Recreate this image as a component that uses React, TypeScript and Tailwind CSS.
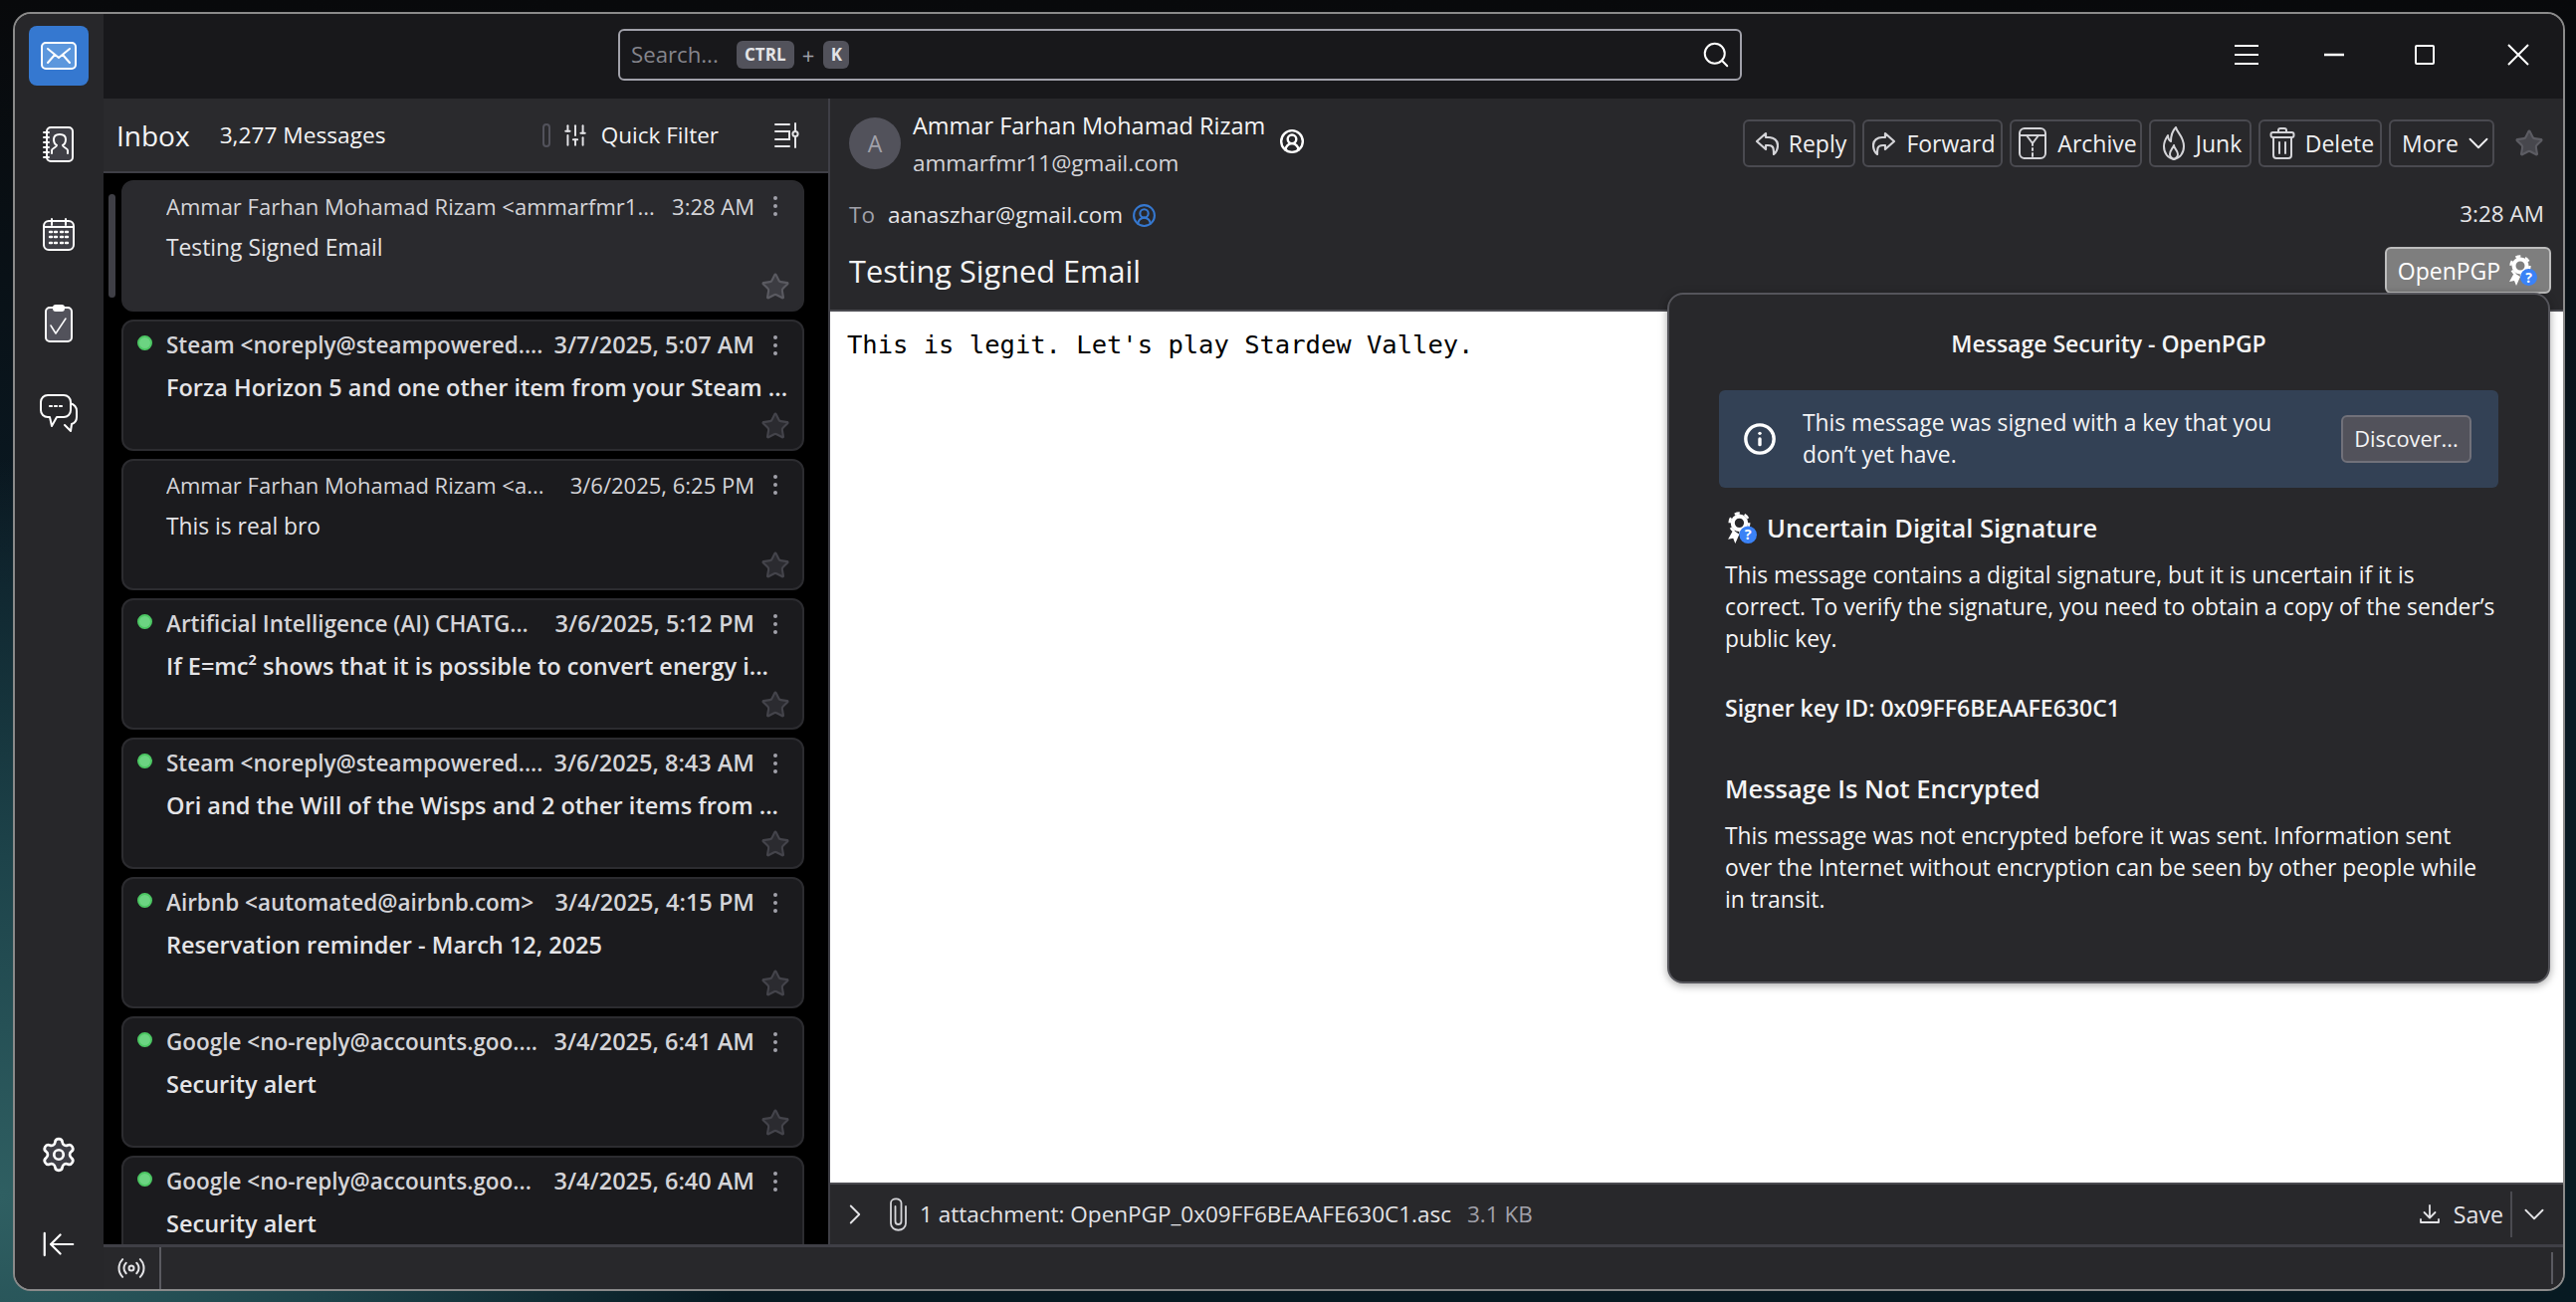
import React from "react";
import { Search, SlidersVertical, Star, Settings, ArrowLeftToLine, Radio, ChevronDown, ChevronRight, Info, CircleUserRound } from "lucide-react";

type Mail = { from: string; date: string; subject: string; unread?: boolean; selected?: boolean };
const mails: Mail[] = [
  { from: "Ammar Farhan Mohamad Rizam <ammarfmr1...", date: "3:28 AM", subject: "Testing Signed Email", selected: true },
  { from: "Steam <noreply@steampowered....", date: "3/7/2025, 5:07 AM", subject: "Forza Horizon 5 and one other item from your Steam ...", unread: true },
  { from: "Ammar Farhan Mohamad Rizam <a...", date: "3/6/2025, 6:25 PM", subject: "This is real bro" },
  { from: "Artificial Intelligence (AI) CHATG...", date: "3/6/2025, 5:12 PM", subject: "If E=mc² shows that it is possible to convert energy i...", unread: true },
  { from: "Steam <noreply@steampowered....", date: "3/6/2025, 8:43 AM", subject: "Ori and the Will of the Wisps and 2 other items from ...", unread: true },
  { from: "Airbnb <automated@airbnb.com>", date: "3/4/2025, 4:15 PM", subject: "Reservation reminder - March 12, 2025", unread: true },
  { from: "Google <no-reply@accounts.goo....", date: "3/4/2025, 6:41 AM", subject: "Security alert", unread: true },
  { from: "Google <no-reply@accounts.goo...", date: "3/4/2025, 6:40 AM", subject: "Security alert", unread: true },
];

function MailGlyph() {
  return (
    <svg width="36" height="28" viewBox="0 0 36 28" fill="none" stroke="#fff" strokeWidth="2" strokeLinecap="round">
      <rect x="1" y="1" width="34" height="26" rx="4" fill="#5c97dd" />
      <path d="M7 7l11 9 11-9M7 21l7-8M29 21l-7-8" />
    </svg>
  );
}
function ContactsGlyph() {
  return (
    <svg width="32" height="36" viewBox="0 0 32 36" fill="none" stroke="#fff" strokeWidth="2" strokeLinecap="round" strokeLinejoin="round">
      <rect x="4" y="1" width="26" height="34" rx="4" fill="#3f3f46" />
      <path d="M1 6h5M1 11h5M1 16h5M1 21h5M1 26h5M1 31h5" />
      <path d="M9 27v-3c0-2 5-3 5-5-2-1-3-3-3-6 0-3 2-5 6-5s6 2 6 5c0 3-1 5-3 6 0 2 5 3 5 5v3" />
    </svg>
  );
}
function CalendarGlyph() {
  return (
    <svg width="32" height="33" viewBox="0 0 32 33" fill="none" stroke="#fff" strokeWidth="2" strokeLinecap="round">
      <rect x="1" y="3" width="30" height="29" rx="5" fill="#3f3f46" />
      <path d="M1 9h30M9 1v6M23 1v6" />
      <path d="M7 14h2M12 14h2M18 14h2M23 14h2M7 19h2M12 19h2M18 19h2M23 19h2M7 25h2M12 25h2M18 25h2M23 25h2" strokeWidth="2.4" />
    </svg>
  );
}
function TasksGlyph() {
  return (
    <svg width="28" height="38" viewBox="0 0 28 38" fill="none" stroke="#fff" strokeWidth="2" strokeLinecap="round" strokeLinejoin="round">
      <rect x="1" y="3" width="26" height="34" rx="4" fill="#52525b" />
      <rect x="9" y="1" width="10" height="5" rx="2" fill="#fff" />
      <path d="M6 21l5 8 10-15" strokeWidth="1.5" />
    </svg>
  );
}
function ChatGlyph() {
  return (
    <svg width="38" height="38" viewBox="0 0 38 38" fill="none" stroke="#fff" strokeWidth="2" strokeLinecap="round" strokeLinejoin="round">
      <path d="M30 9c4 1 7 4 7 8v6c0 4-2 6-5 7l-1 7-6-6" />
      <path d="M8 1h16c4 0 7 3 7 7v8c0 4-3 7-7 7H17l-5 9-2-9H8c-4 0-7-3-7-7V8c0-4 3-7 7-7z" fill="#27272a" />
      <path d="M10 12h2M15 12h2M20 12h2" strokeWidth="2.2" />
    </svg>
  );
}
function MenuGlyph() {
  return (
    <svg width="24" height="20" viewBox="0 0 24 20" stroke="#fff" strokeWidth="2"><path d="M0 1h24M0 10h24M0 19h24" /></svg>
  );
}
function MinimizeGlyph() {
  return <svg width="20" height="4" viewBox="0 0 20 4" stroke="#fff" strokeWidth="2.4"><path d="M0 2h20" /></svg>;
}
function MaximizeGlyph() {
  return <svg width="20" height="20" viewBox="0 0 20 20" fill="none" stroke="#fff" strokeWidth="2"><rect x="1" y="1" width="18" height="18" rx="1" /></svg>;
}
function CloseGlyph() {
  return <svg width="22" height="22" viewBox="0 0 22 22" stroke="#fff" strokeWidth="2"><path d="M1 1l20 20M21 1L1 21" /></svg>;
}
function LayoutGlyph() {
  return (
    <svg width="26" height="26" viewBox="0 0 26 26" fill="none" stroke="#e4e4e7" strokeWidth="2" strokeLinecap="round">
      <path d="M2 2h14M2 24h14M2 9h14v8H2M22 1v7M22 15v10" />
      <circle cx="22" cy="11.5" r="2.6" />
    </svg>
  );
}
function ReplyGlyph({ flip }: { flip?: boolean }) {
  return (
    <svg width="24" height="24" viewBox="0 0 24 24" fill="none" stroke="#d4d4d8" strokeWidth="2.2" strokeLinejoin="round" className={flip ? "-scale-x-100" : ""}>
      <path d="M11 2L2 10l9 8v-4h2c3 0 5 1 5.500 3 .5 2 .5 4 .5 6 2.500-2 4-5 4-9 0-5-4-8-9-8h-3V2z" />
    </svg>
  );
}
function ArchiveGlyph() {
  return (
    <svg width="30" height="34" viewBox="0 0 30 34" fill="none" stroke="#d4d4d8" strokeWidth="2" strokeLinecap="round" strokeLinejoin="round">
      <rect x="2" y="2" width="26" height="30" rx="5" />
      <path d="M2 9h26M9 9l6 8 6-8M15 17v2M15 22v2M15 27v3" />
    </svg>
  );
}
function FlameGlyph() {
  return (
    <svg width="24" height="34" viewBox="0 0 24 34" fill="none" stroke="#d4d4d8" strokeWidth="2" strokeLinecap="round" strokeLinejoin="round">
      <path d="M14 1c1 5 8 9 8 19 0 7-4 12-10 13C6 32 2 27 2 20c0-5 2-8 4-11 0 3 1 5 3 6 0-5 1-10 5-14z" />
      <path d="M12 19c0 3 4 5 4 9 0 2-2 4-4 5-2-1-4-3-4-5 0-4 3-6 4-9z" />
    </svg>
  );
}
function TrashGlyph() {
  return (
    <svg width="26" height="32" viewBox="0 0 26 32" fill="none" stroke="#d4d4d8" strokeWidth="2" strokeLinecap="round" strokeLinejoin="round">
      <rect x="1.5" y="5" width="23" height="5" rx="2" />
      <path d="M9 5V3c0-1 1-2 2-2h4c1 0 2 1 2 2v2M4 10v18c0 2 1 3 3 3h12c2 0 3-1 3-3V10M10 15v11M16 15v11" />
    </svg>
  );
}
function ClipGlyph() {
  return (
    <svg width="17" height="34" viewBox="0 0 17 34" fill="none" stroke="#d4d4d8" strokeWidth="1.8" strokeLinecap="round">
      <path d="M5.500 9v15c0 4 6 4 6 0V5.500c0-5.500-10.500-5.500-10.500 0V26c0 9 15 9 15 0V9" />
    </svg>
  );
}
function SaveGlyph() {
  return (
    <svg width="20" height="20" viewBox="0 0 20 20" fill="none" stroke="#e4e4e7" strokeWidth="1.8" strokeLinecap="round" strokeLinejoin="round">
      <path d="M10 1v12M4.500 8l5.500 5.500L15.500 8M1 15v3h18v-3" />
    </svg>
  );
}
function SignatureGlyph({ size }: { size: number }) {
  return (
    <svg width={size} height={size} viewBox="0 0 32 32" fill="none">
      <circle cx="14" cy="11" r="6.500" stroke="#fff" strokeWidth="4" />
      <circle cx="14" cy="11" r="9.500" stroke="#fff" strokeWidth="2.400" strokeDasharray="5 4.950" />
      <path d="M8 18l-5 9 5-1 2 5 4-9z" fill="#fff" />
      <circle cx="22.500" cy="22.500" r="8.500" fill="#3b82f6" />
      <text x="22.500" y="27.500" textAnchor="middle" fontSize="14" fontWeight="700" fill="#fff" fontFamily="Open Sans">?</text>
    </svg>
  );
}

function MailCard({ m }: { m: Mail }) {
  const sender = m.unread ? "text-[22.500px] font-semibold" : "text-[22px] font-normal";
  const date = m.unread ? "text-[23.500px] font-semibold" : "text-[22px] font-normal";
  const subject = m.unread ? "text-[23.500px] font-semibold" : "text-[22.800px] font-normal";
  return (
    <div className={`relative mb-2 flex h-[132px] shrink-0 flex-col rounded-xl border-2 pl-[14px] pr-[14px] pt-[6px] ${m.selected ? "border-[#2a2a2e] bg-[#2a2a2e]" : "border-[#2c2c30] bg-[#1b1b1e]"}`}>
      <div className="flex h-[36px] items-center">
        <div className="flex w-[29px] shrink-0 self-start pt-[8px]">
          {m.unread && <div className="h-[15px] w-[15px] rounded-full border-2 border-[#4cc763] bg-[#6cd482]" />}
        </div>
        <div className={`min-w-0 flex-1 truncate text-[#d4d4d8] ${sender}`}>{m.from}</div>
        <div className={`shrink-0 text-[#d4d4d8] ${date}`}>{m.date}</div>
        <div className="ml-[18px] mr-[10px] flex w-[6px] shrink-0 flex-col items-center gap-[4px] self-start pt-[8px]">
          <div className="h-[4px] w-[4px] rounded-full bg-[#a1a1aa]" />
          <div className="h-[4px] w-[4px] rounded-full bg-[#a1a1aa]" />
          <div className="h-[4px] w-[4px] rounded-full bg-[#a1a1aa]" />
        </div>
      </div>
      <div className={`ml-[29px] mt-[6px] h-[36px] whitespace-nowrap leading-[36px] text-[#e4e4e7] ${subject}`}>{m.subject}</div>
      <div className="-mr-[2px] mt-auto flex justify-end pb-[8px]">
        <Star size={30} strokeWidth={1.7} className={m.selected ? "text-[#5a5a61]" : "text-[#44444b]"} fill={m.selected ? "#3c3c42" : "#2b2b30"} />
      </div>
    </div>
  );
}

function ToolButton({ w, icon, label }: { w: string; icon: React.ReactNode; label: string }) {
  return (
    <button className={`flex h-[48px] items-center justify-center gap-[10px] rounded-md border-2 border-[#4a4a50] pl-[3px] text-[23px] text-[#f0f0f2] ${w}`}>
      {icon}
      <span>{label}</span>
    </button>
  );
}

export default function App() {
  return (
    <div className="h-[1308px] w-[2588px] overflow-hidden bg-[radial-gradient(circle_at_0%_92%,#2f5f62_0%,#1d434a_12%,transparent_26%),linear-gradient(180deg,#08090b_0%,#0a1a24_45%,#071a22_100%)] pl-[13px] pt-[12px] font-['Open_Sans',sans-serif]">
      <div className="flex h-[1285px] w-[2564px] overflow-hidden rounded-[18px] border-2 border-[#8a8a8a] bg-[#27272a]">
        <aside className="flex w-[89px] shrink-0 flex-col items-center bg-[#27272a] pr-[1px] pt-[12px]">
          <div className="mb-[14px] flex h-[60px] w-[60px] items-center justify-center rounded-lg bg-[#3578d0]"><MailGlyph /></div>
          <div className="flex h-[90px] items-center"><ContactsGlyph /></div>
          <div className="flex h-[90px] items-center"><CalendarGlyph /></div>
          <div className="flex h-[90px] items-center"><TasksGlyph /></div>
          <div className="flex h-[90px] items-center"><ChatGlyph /></div>
          <div className="mt-auto flex h-[90px] items-center"><Settings size={38} strokeWidth={1.7} className="text-white" fill="#3f3f46" /></div>
          <div className="flex h-[90px] items-center"><ArrowLeftToLine size={38} strokeWidth={1.4} className="text-white" /></div>
        </aside>
        <div className="flex min-w-0 flex-1 flex-col">
          <header className="flex h-[85px] shrink-0 items-center bg-[#18181b] pb-[3px] pl-[517px]">
            <div className="flex h-[52px] w-[1129px] items-center rounded-md border-2 border-[#a1a1aa] pl-[11px] pr-[9px]">
              <span className="text-[22.200px] text-[#85858c]">Search...</span>
              <span className="ml-[18px] flex h-[28px] w-[58px] items-center justify-center rounded-md bg-[#52525b] text-[17px] font-bold text-[#e4e4e7]">CTRL</span>
              <span className="ml-[8px] mr-[9px] text-[22px] text-[#a1a1aa]">+</span>
              <span className="flex h-[28px] w-[26px] items-center justify-center rounded-md bg-[#52525b] text-[17px] font-bold text-[#e4e4e7]">K</span>
              <Search size={30} strokeWidth={1.6} className="ml-auto text-white" />
            </div>
            <div className="ml-auto flex">
              <div className="flex h-[40px] w-[91px] items-center justify-center"><MenuGlyph /></div>
              <div className="flex h-[40px] w-[86px] items-center justify-center"><MinimizeGlyph /></div>
              <div className="flex h-[40px] w-[96px] items-center justify-center"><MaximizeGlyph /></div>
              <div className="flex h-[40px] w-[91px] items-center justify-center"><CloseGlyph /></div>
            </div>
          </header>
          <div className="flex min-h-0 flex-1">
            <section className="flex w-[728px] shrink-0 flex-col bg-black">
              <div className="flex h-[75px] shrink-0 items-center border-b-2 border-[#3f3f46] bg-[#2a2a2d] pl-[13px] pr-[29px] pt-[1px] text-[#f4f4f5]">
                <span className="text-[28px] font-medium">Inbox</span>
                <span className="ml-[30px] text-[22.700px]">3,277 Messages</span>
                <div className="ml-auto h-[24px] w-[8px] rounded-full border-2 border-[#52525b]" />
                <SlidersVertical size={26} strokeWidth={1.8} className="ml-[12px] rotate-180 text-[#e4e4e7]" />
                <span className="ml-[13px] text-[22.500px]">Quick Filter</span>
                <div className="ml-[55px]"><LayoutGlyph /></div>
              </div>
              <div className="relative min-h-0 flex-1 overflow-hidden pl-[18px] pr-[24px] pt-[7px]">
                <div className="absolute left-[5px] top-[21px] h-[104px] w-[7px] rounded-full bg-[#3f3f46]" />
                {mails.map((m, i) => (
                  <MailCard key={i} m={m} />
                ))}
              </div>
            </section>
            <section className="relative flex min-w-0 flex-1 flex-col border-l-2 border-[#3f3f46]">
              <div className="h-[214px] shrink-0 border-b-2 border-[#4a4a50] bg-[#28282b] pl-[19px] pr-[19px]">
                <div className="flex h-[97px] items-start">
                  <div className="mt-[19px] flex h-[52px] w-[52px] shrink-0 items-center justify-center rounded-full bg-[#52525b] text-[23px] text-[#a1a1aa]">A</div>
                  <div className="ml-[12px] pt-[9px]">
                    <span className="text-[23.500px] leading-[37px] text-[#f4f4f5]">Ammar Farhan Mohamad Rizam</span>
                    <div className="text-[22.500px] leading-[37px] text-[#d4d4d8]">ammarfmr11@gmail.com</div>
                  </div>
                  <CircleUserRound size={26} strokeWidth={2.2} className="ml-[14px] mt-[30px] text-white" />
                  <div className="ml-auto mt-[21px] flex items-center gap-[7px]">
                    <ToolButton w="w-[113px]" icon={<ReplyGlyph />} label="Reply" />
                    <ToolButton w="w-[141px]" icon={<ReplyGlyph flip />} label="Forward" />
                    <ToolButton w="w-[133px]" icon={<ArchiveGlyph />} label="Archive" />
                    <ToolButton w="w-[103px]" icon={<FlameGlyph />} label="Junk" />
                    <ToolButton w="w-[124px]" icon={<TrashGlyph />} label="Delete" />
                    <button className="flex h-[48px] w-[106px] items-center gap-[3px] rounded-md border-2 border-[#4a4a50] pl-[11px] text-[23px] text-[#f0f0f2]">
                      More <ChevronDown size={34} strokeWidth={1.3} className="shrink-0" />
                    </button>
                    <Star size={30} strokeWidth={1.7} className="ml-[13px] text-[#5c5c63]" fill="#47474d" />
                  </div>
                </div>
                <div className="flex h-[40px] items-center text-[22.500px]">
                  <span className="text-[#a1a1aa]">To</span>
                  <span className="ml-[13px] text-[#e4e4e7]">aanaszhar@gmail.com</span>
                  <CircleUserRound size={25} strokeWidth={2} className="ml-[9px] text-[#3578d0]" />
                  <span className="ml-auto -translate-y-px text-[22.500px] text-[#e4e4e7]">3:28 AM</span>
                </div>
                <div className="mt-[12px] flex h-[47px] items-center">
                  <span className="translate-y-px text-[30.700px] text-[#f4f4f5]">Testing Signed Email</span>
                  <button className="-mr-[7px] ml-auto flex h-[47px] w-[167px] items-center justify-center gap-[6px] rounded-md border-2 border-[#bdbdbd] bg-[#7e7e7e] text-[23px] text-white">
                    <span className="translate-y-px">OpenPGP</span> <SignatureGlyph size={32} />
                  </button>
                </div>
              </div>
              <div className="min-h-0 flex-1 bg-white pl-[17px] pt-[19px] font-['DejaVu_Sans_Mono',monospace] text-[25.500px] leading-[28px] text-black">
                This is legit. Let's play Stardew Valley.
              </div>
              <div className="flex h-[62px] shrink-0 items-center border-t-2 border-[#4a4a50] bg-[#28282b] pl-[8px] pr-[12px] text-[#e4e4e7]">
                <ChevronRight size={34} strokeWidth={1.3} />
                <div className="ml-[18px]"><ClipGlyph /></div>
                <span className="ml-[13px] text-[22.500px]">1 attachment: OpenPGP_0x09FF6BEAAFE630C1.asc</span>
                <span className="ml-[16px] text-[22.500px] text-[#a1a1aa]">3.1 KB</span>
                <div className="ml-auto"><SaveGlyph /></div>
                <span className="ml-[14px] text-[23.200px]">Save</span>
                <div className="ml-[7px] h-[46px] w-[2px] bg-[#4a4a50]" />
                <ChevronDown size={34} strokeWidth={1.3} className="ml-[5px]" />
              </div>
              <div className="absolute left-[841px] top-[195px] flex h-[694px] w-[887px] flex-col rounded-2xl border-2 border-[#55555b] bg-[#28282b] px-[50px] text-[#f4f4f5] shadow-[0_2px_8px_rgba(0,0,0,0.35)]">
                <div className="mt-[31px] h-[36px] text-center text-[23px] font-semibold leading-[36px]">Message Security - OpenPGP</div>
                <div className="mt-[29px] flex h-[98px] items-center rounded-md bg-[#334155] pl-[24px] pr-[27px]">
                  <Info size={34} strokeWidth={2.4} className="shrink-0 text-white" />
                  <div className="ml-[26px] text-[22.800px] leading-[32px]">
                    This message was signed with a key that you<br />don’t yet have.
                  </div>
                  <button className="ml-auto flex h-[48px] w-[131px] items-center justify-center rounded-md border-2 border-[#71717a] bg-[#52525b] text-[21.800px] text-[#f4f4f5]">Discover...</button>
                </div>
                <div className="ml-[6px] mt-[22px] flex h-[36px] items-center">
                  <SignatureGlyph size={33} />
                  <span className="ml-[9px] text-[25.500px] font-semibold">Uncertain Digital Signature</span>
                </div>
                <div className="ml-[6px] mt-[14px] whitespace-nowrap text-[22.800px] leading-[32px]">
                  This message contains a digital signature, but it is uncertain if it is<br />
                  correct. To verify the signature, you need to obtain a copy of the sender’s<br />
                  public key.
                </div>
                <div className="ml-[6px] mt-[37px] h-[32px] text-[23px] font-semibold leading-[32px]">Signer key ID: 0x09FF6BEAAFE630C1</div>
                <div className="ml-[6px] mt-[47px] h-[36px] text-[25.500px] font-semibold leading-[36px]">Message Is Not Encrypted</div>
                <div className="ml-[6px] mt-[14px] whitespace-nowrap text-[22.800px] leading-[32px]">
                  This message was not encrypted before it was sent. Information sent<br />
                  over the Internet without encryption can be seen by other people while<br />
                  in transit.
                </div>
              </div>
            </section>
          </div>
          <footer className="flex h-[45px] shrink-0 items-center border-t-[3px] border-[#3f3f46] bg-[#28282b] pr-[10px]">
            <div className="flex h-full w-[58px] items-center justify-center border-r-2 border-[#5a5a60]">
              <Radio size={30} strokeWidth={1.6} className="text-[#e4e4e7]" />
            </div>
            <div className="ml-auto h-[32px] w-[2px] bg-[#5a5a60]" />
          </footer>
        </div>
      </div>
    </div>
  );
}
